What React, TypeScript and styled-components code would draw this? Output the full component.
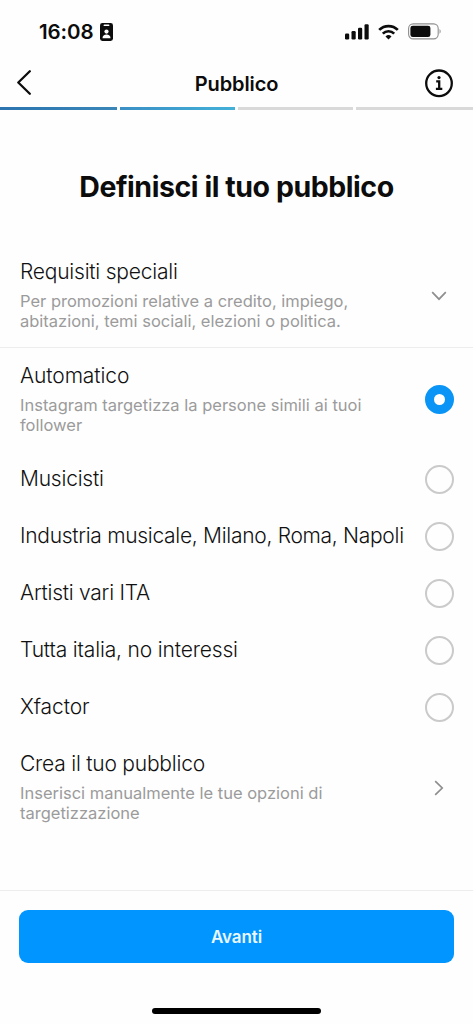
import React, { useState } from "react";
import styled, { createGlobalStyle } from "styled-components";

const GlobalStyle = createGlobalStyle`
  * { box-sizing: border-box; }
  body { margin: 0; background: #fefefe; }
`;

const Screen = styled.div`
  width: 473px;
  height: 1024px;
  display: flex;
  flex-direction: column;
  background: #fefefe;
  color: #0c0c0c;
  font-family: Inter, "Liberation Sans", sans-serif;
  overflow: hidden;
`;

const StatusBar = styled.div`
  height: 58px;
  padding: 5px 32px 0 39px;
  display: flex;
  align-items: center;
  justify-content: space-between;
`;

const Clock = styled.div`
  display: flex;
  align-items: center;
  gap: 6.5px;
  font-size: 20.5px;
  font-weight: 600;
  letter-spacing: -0.08px;
`;

const Indicators = styled.div`
  display: flex;
  align-items: center;
  gap: 9px;
`;

const NavBar = styled.header`
  height: 49px;
  padding: 0 19px 0 16px;
  display: grid;
  grid-template-columns: 30px 1fr 30px;
  align-items: center;
`;

const NavTitle = styled.h1`
  margin: 0;
  padding: 3px 0 0 3px;
  text-align: center;
  font-size: 20px;
  line-height: 24px;
  font-weight: 600;
  letter-spacing: -0.1px;
`;

const IconButton = styled.button`
  display: flex;
  padding: 0;
  border: 0;
  background: none;
  color: #0c0c0c;
`;

const Steps = styled.div`
  display: grid;
  grid-template-columns: 116.5px 115px 115.5px 117px;
  gap: 3px;
  height: 3px;
`;

const Step = styled.div<{ $fill: string }>`
  background: ${(p) => p.$fill};
`;

const Heading = styled.h2`
  margin: 0;
  height: 134px;
  padding-top: 59px;
  text-align: center;
  font-size: 28.5px;
  line-height: 36px;
  font-weight: 700;
  letter-spacing: -0.44px;
`;

const Row = styled.div<{ $tall?: boolean; $divided?: boolean }>`
  height: ${(p) => (p.$divided ? "104px" : p.$tall ? "103px" : "57px")};
  flex: none;
  padding: 0 19.5px 0 20px;
  display: flex;
  align-items: center;
  justify-content: space-between;
  border-bottom: ${(p) => (p.$divided ? "1px solid #ededed" : "0")};
`;

const RowText = styled.div`
  display: flex;
  flex-direction: column;
  gap: 6px;
  padding-bottom: 2px;
`;

const RowTitle = styled.div<{ $track?: number }>`
  font-size: 21px;
  line-height: 26px;
  font-weight: 300;
  color: #111;
  white-space: nowrap;
  letter-spacing: ${(p) => p.$track ?? -0.22}px;
`;

const RowNote = styled.div`
  margin: 1px 0 -1px;
  font-size: 16.5px;
  line-height: 19.5px;
  font-weight: 400;
  color: #9b9b9b;
  white-space: pre;
`;

const Radio = styled.button<{ $on: boolean }>`
  flex: none;
  width: 29px;
  height: 29px;
  padding: 0;
  border-radius: 50%;
  background: #fefefe;
  border: ${(p) => (p.$on ? "9px solid #0a95f6" : "2px solid #cacaca")};
`;

const IconSlot = styled.span`
  width: 30px;
  display: flex;
  justify-content: center;
`;

const Footer = styled.footer`
  margin-top: auto;
  height: 134px;
  padding: 19px 19px 0 19px;
  border-top: 1px solid #ededed;
  display: flex;
  flex-direction: column;
  align-items: center;
`;

const PrimaryButton = styled.button`
  width: 100%;
  height: 53px;
  border: 0;
  border-radius: 9px;
  background: #0095ff;
  color: #e9f7ff;
  font: 600 17px/20px Inter, "Liberation Sans", sans-serif;
  letter-spacing: -0.1px;
`;

const HomeIndicator = styled.div`
  margin-top: 45px;
  width: 169px;
  height: 6px;
  border-radius: 3px;
  background: #000;
`;

const BadgeIcon = () => (
  <svg width="13" height="18" viewBox="0 0 13 18">
    <rect width="13" height="18" rx="2.4" fill="#0c0c0c" />
    <rect x="3.6" y="1.6" width="5.8" height="1.5" rx="0.7" fill="#fff" />
    <circle cx="6.5" cy="8.6" r="2.1" fill="#fff" />
    <path d="M2.5 15.2c0-2.4 1.6-3.7 4-3.7s4 1.3 4 3.7z" fill="#fff" />
  </svg>
);

const SignalIcon = () => (
  <svg width="24" height="16" viewBox="0 0 24 16" fill="#0c0c0c">
    <rect x="0" y="9.5" width="4.2" height="6" rx="1.2" />
    <rect x="6.5" y="7" width="4.2" height="8.5" rx="1.2" />
    <rect x="13" y="3.8" width="4.2" height="11.7" rx="1.2" />
    <rect x="19.5" y="0.3" width="4.2" height="15.2" rx="1.2" />
  </svg>
);

const WifiIcon = () => (
  <svg width="21" height="16" viewBox="0 0 21 16" fill="none" stroke="#0c0c0c" strokeWidth="2.7">
    <path d="M1.2 5.9a13.2 13.2 0 0 1 18.6 0" />
    <path d="M4.8 9.6a8.1 8.1 0 0 1 11.4 0" />
    <path d="M10.5 15.4l-3-3a4.3 4.3 0 0 1 6 0z" fill="#0c0c0c" stroke="none" />
  </svg>
);

const BatteryIcon = () => (
  <svg width="33" height="17" viewBox="0 0 33 17">
    <rect x="0.6" y="0.9" width="29.6" height="15" rx="4.6" fill="none" stroke="#8e8e8e" strokeWidth="1.1" />
    <rect x="2.4" y="2.7" width="20" height="11.4" rx="2.4" fill="#0c0c0c" />
    <path d="M31.6 6.1c1.3.7 1.3 3.9 0 4.6z" fill="#777" />
  </svg>
);

const BackIcon = () => (
  <svg width="17" height="26" viewBox="0 0 17 26" fill="none" stroke="currentColor" strokeWidth="2.3" strokeLinecap="round" strokeLinejoin="round">
    <path d="M13.8 1.3L2.3 12.5l11.5 11.2" />
  </svg>
);

const InfoIcon = () => (
  <svg width="30" height="30" viewBox="0 0 30 30" fill="none" stroke="currentColor" strokeWidth="2.3">
    <circle cx="15" cy="15.3" r="12.8" />
    <path d="M12.2 13.3h3v7.2M11.9 20.9h6.4" />
    <circle cx="15" cy="9.6" r="1.6" fill="currentColor" stroke="none" />
  </svg>
);

const ChevronDown = () => (
  <svg width="16" height="10" viewBox="0 0 16 10" fill="none" stroke="#8e8e8e" strokeWidth="1.7">
    <path d="M1.2 1.2L8 8.2l6.8-7" />
  </svg>
);

const ChevronRight = () => (
  <svg width="10" height="16" viewBox="0 0 10 16" fill="none" stroke="#8e8e8e" strokeWidth="1.7">
    <path d="M1.2 1.2L8.2 8l-7 6.8" />
  </svg>
);

interface Audience {
  title: string;
  note?: string;
  track?: number;
}

const audiences: Audience[] = [
  { title: "Automatico", note: "Instagram targetizza la persone simili ai tuoi\nfollower", track: -0.1 },
  { title: "Musicisti" },
  { title: "Industria musicale, Milano, Roma, Napoli", track: -0.29 },
  { title: "Artisti vari ITA", track: -0.25 },
  { title: "Tutta italia, no interessi", track: -0.16 },
  { title: "Xfactor", track: -0.1 },
];

const stepFills = [
  "linear-gradient(90deg, #2b74b0, #3a86b8)",
  "linear-gradient(90deg, #3a8fc4, #42b0d8)",
  "#d9d9d9",
  "#d9d9d9",
];

export default function App() {
  const [selected, setSelected] = useState(0);
  return (
    <Screen>
      <GlobalStyle />
      <StatusBar>
        <Clock>
          16:08
          <BadgeIcon />
        </Clock>
        <Indicators>
          <SignalIcon />
          <WifiIcon />
          <BatteryIcon />
        </Indicators>
      </StatusBar>
      <NavBar>
        <IconButton aria-label="Indietro"><BackIcon /></IconButton>
        <NavTitle>Pubblico</NavTitle>
        <IconButton aria-label="Informazioni"><InfoIcon /></IconButton>
      </NavBar>
      <Steps>
        {stepFills.map((fill, i) => <Step key={i} $fill={fill} />)}
      </Steps>
      <Heading>Definisci il tuo pubblico</Heading>
      <Row $divided>
        <RowText>
          <RowTitle>Requisiti speciali</RowTitle>
          <RowNote>{"Per promozioni relative a credito, impiego,\nabitazioni, temi sociali, elezioni o politica."}</RowNote>
        </RowText>
        <IconSlot><ChevronDown /></IconSlot>
      </Row>
      {audiences.map((a, i) => (
        <Row key={a.title} $tall={!!a.note}>
          <RowText>
            <RowTitle $track={a.track}>{a.title}</RowTitle>
            {a.note && <RowNote>{a.note}</RowNote>}
          </RowText>
          <Radio $on={i === selected} aria-label={a.title} onClick={() => setSelected(i)} />
        </Row>
      ))}
      <Row $tall>
        <RowText>
          <RowTitle>Crea il tuo pubblico</RowTitle>
          <RowNote>{"Inserisci manualmente le tue opzioni di\ntargetizzazione"}</RowNote>
        </RowText>
        <IconSlot><ChevronRight /></IconSlot>
      </Row>
      <Footer>
        <PrimaryButton>Avanti</PrimaryButton>
        <HomeIndicator />
      </Footer>
    </Screen>
  );
}
